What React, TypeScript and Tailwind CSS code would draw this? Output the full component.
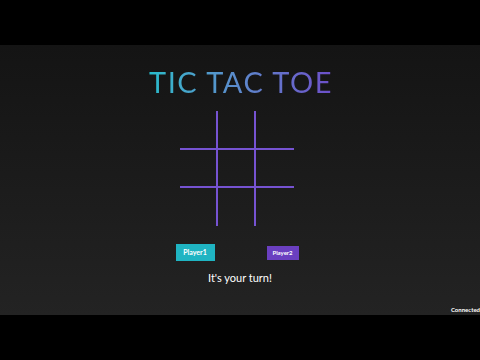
import React, { useState } from "react";

export default function App() {
  const [board] = useState<string[]>(Array(9).fill(""));

  return (
    <div className="w-[480px] h-[360px] bg-black flex flex-col" style={{ fontFamily: "Lato, 'Open Sans', sans-serif" }}>
      <div className="h-[45px]" />

      {/* game area */}
      <div className="h-[270px] bg-linear-to-b from-[#141414] to-[#232323] flex flex-col items-center relative">
        <h1 className="mt-[21px] text-[29px] leading-[32px] tracking-[1.5px] bg-linear-to-r from-[#22bccb] to-[#6c4ec9] bg-clip-text text-transparent pl-[2px]">
          TIC TAC TOE
        </h1>

        <div className="mt-[13px] mr-[6px] grid grid-cols-3">
          {board.map((v, i) => (
            <div
              key={i}
              className={`w-[38px] border-[#7653d2] ${i < 3 ? "h-[39px]" : "h-[38px]"} ${i % 3 < 2 ? "border-r-2" : ""} ${i < 6 ? "border-b-2" : ""}`}
            >
              {v}
            </div>
          ))}
        </div>

        <div className="mt-[18px] mr-[6px] w-[123px] flex items-center justify-between">
          <button className="w-[39px] h-[17px] bg-[#1fb4c2] text-white text-[7px] font-bold">Player1</button>
          <button className="w-[32px] h-[14px] bg-[#6a3fc0] text-white text-[6px] font-bold">Player2</button>
        </div>

        <p className="mt-[10px] text-white text-[11px] leading-[14px]">It's your turn!</p>

        <span className="absolute right-0 bottom-[2px] text-white text-[6px] font-bold leading-none">Connected</span>
      </div>

      <div className="flex-1" />
    </div>
  );
}
